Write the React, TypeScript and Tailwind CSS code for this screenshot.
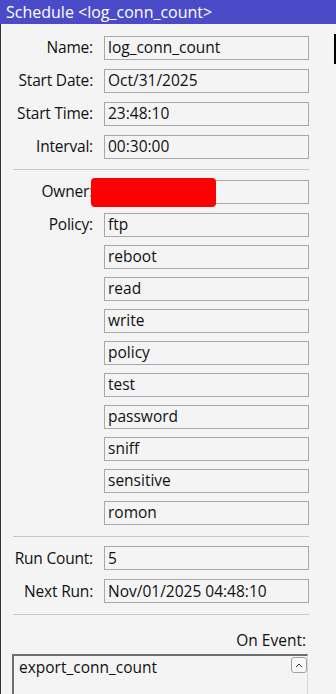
const font = { fontFamily: '"Open Sans", "Noto Sans", sans-serif' };

function Field({ label, value, className = "" }: { label?: string; value: string; className?: string }) {
  return (
    <div className={`flex items-center ${className}`}>
      <div className="w-[94px] shrink-0 pr-[2px] text-right text-[15.5px] tracking-[-0.2px] text-[#111]">{label}</div>
      <div className="ml-[9px] flex h-[24px] w-[205px] items-center border border-[#a8a8a8] bg-[#f4f4f4] pl-[3px] text-[15.5px] text-[#111]">
        {value}
      </div>
    </div>
  );
}

function Separator({ className = "" }: { className?: string }) {
  return <div className={`ml-[12px] h-px w-[296px] bg-[#c8c8c8] ${className}`} />;
}

const policies = ["ftp", "reboot", "read", "write", "policy", "test", "password", "sniff", "sensitive", "romon"];

export default function App() {
  return (
    <div className="h-[694px] w-[336px] overflow-hidden bg-[#f4f4f4]" style={font}>
      <div className="flex h-[24px] items-center bg-[#4b4bca] pl-[6px] text-[16px] text-white">
        Schedule &lt;log_conn_count&gt;
      </div>
      <div className="flex h-[670px] border-l border-[#333]">
        <div className="flex w-[308px] shrink-0 flex-col">
          <div className="mt-[12px] flex flex-col gap-[9px]">
            <Field label="Name:" value="log_conn_count" />
            <Field label="Start Date:" value="Oct/31/2025" />
            <Field label="Start Time:" value="23:48:10" />
            <Field label="Interval:" value="00:30:00" />
          </div>
          <Separator className="mt-[10px]" />
          <div className="relative mt-[10px]">
            <Field label="Owner:" value="" />
            <div className="absolute left-[90px] top-[-2px] h-[29px] w-[125px] rounded-[4px] bg-[#ff0000]" />
          </div>
          <div className="mt-[9px] flex flex-col gap-[8px]">
            {policies.map((p, i) => (
              <Field key={p} label={i === 0 ? "Policy:" : ""} value={p} />
            ))}
          </div>
          <Separator className="mt-[11px]" />
          <div className="mt-[10px] flex flex-col gap-[9px]">
            <Field label="Run Count:" value="5" />
            <Field label="Next Run:" value="Nov/01/2025 04:48:10" />
          </div>
          <Separator className="mt-[11px]" />
          <div className="mt-[14px] pr-[3px] text-right text-[15.5px] text-[#111]">On Event:</div>
          <div className="relative ml-[11px] mt-[2px] h-[60px] w-[296px] border-l-2 border-t-2 border-[#6e6e6e] border-r border-r-[#d8d8d8] pl-[5px] text-[15.5px] text-[#111]">
            export_conn_count
            <div className="absolute right-[0px] top-[1px] flex h-[16px] w-[16px] items-center justify-center rounded-[3px] border border-[#a0a0a0] bg-[#f8f8f8]">
              <svg width="8" height="5" viewBox="0 0 8 5" fill="none">
                <path d="M1 4L4 1L7 4" stroke="#333" strokeWidth="1" />
              </svg>
            </div>
          </div>
        </div>
        <div className="ml-[25px] mt-[10px] h-[30px] w-[40px] shrink-0 border-2 border-black" />
      </div>
    </div>
  );
}
